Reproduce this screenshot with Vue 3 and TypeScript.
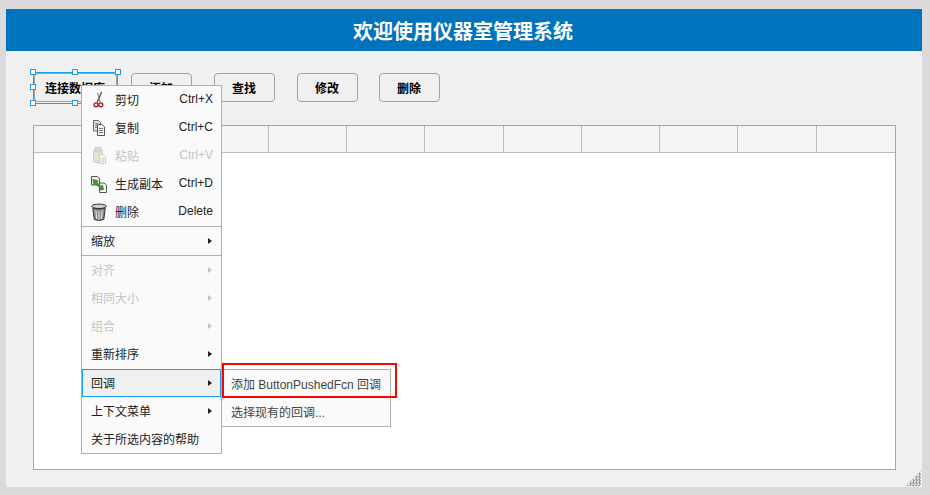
<script setup lang="ts">
interface Item { label: string; key?: string; icon?: string; disabled?: boolean; arrow?: boolean; cls?: string }
const buttons = [
  { label: '连接数据库', cls: 'b0' },
  { label: '添加', cls: 'b1' },
  { label: '查找', cls: 'b2' },
  { label: '修改', cls: 'b3' },
  { label: '删除', cls: 'b4' },
]
const columns = Array.from({ length: 11 }, (_, i) => i)
const top: Item[] = [
  { label: '剪切', key: 'Ctrl+X', icon: 'cut' },
  { label: '复制', key: 'Ctrl+C', icon: 'copy' },
  { label: '粘贴', key: 'Ctrl+V', icon: 'paste', disabled: true },
  { label: '生成副本', key: 'Ctrl+D', icon: 'dup' },
  { label: '删除', key: 'Delete', icon: 'trash' },
]
const rest: Item[] = [
  { label: '对齐', arrow: true, disabled: true },
  { label: '相同大小', arrow: true, disabled: true },
  { label: '组合', arrow: true, disabled: true },
  { label: '重新排序', arrow: true },
  { label: '回调', arrow: true, cls: 'active' },
  { label: '上下文菜单', arrow: true },
  { label: '关于所选内容的帮助' },
]
const handles = ['tl', 'tc', 'tr', 'ml', 'bl', 'bc', 'br']
</script>

<template>
  <div class="page">
    <div class="window">
      <header class="title">欢迎使用仪器室管理系统</header>
      <div class="toolbar">
        <button v-for="b in buttons" :key="b.label" class="btn" :class="b.cls">{{ b.label }}</button>
      </div>
      <div class="table">
        <div class="thead">
          <div v-for="c in columns" :key="c" class="th"></div>
        </div>
      </div>
      <div class="grip"></div>

      <div class="selection">
        <span v-for="h in handles" :key="h" class="handle" :class="h"></span>
      </div>

      <div class="menu">
        <div class="group">
          <div v-for="it in top" :key="it.label" class="row" :class="{ off: it.disabled }">
            <span class="ico">
              <svg v-if="it.icon === 'cut'" width="20" height="20" viewBox="0 0 20 20">
                <path d="M13.6 2 L9.2 12.4" stroke="#444" stroke-width="1.2" fill="none" />
                <path d="M9.6 3 L12.3 12.4" stroke="#888" stroke-width="1.2" fill="none" />
                <circle cx="8" cy="14.8" r="2" stroke="#b01020" stroke-width="1.3" fill="none" />
                <circle cx="12.8" cy="14.8" r="2" stroke="#b01020" stroke-width="1.3" fill="none" />
              </svg>
              <svg v-else-if="it.icon === 'copy'" width="20" height="20" viewBox="0 0 20 20">
                <path d="M5.5 2.5 H10.5 L12.5 4.5 V13 H5.5 Z" fill="#e4e4e4" stroke="#666" />
                <path d="M9.5 6.5 H14 L16.5 9 V17.5 H9.5 Z" fill="#f4f4f4" stroke="#555" />
                <path d="M7 5.5H10M7 7.5H9M7 9.5H9M11 10.5H15M11 12.5H15M11 14.5H15" stroke="#777" stroke-width="1" />
              </svg>
              <svg v-else-if="it.icon === 'paste'" width="20" height="20" viewBox="0 0 20 20">
                <rect x="5.5" y="3.5" width="9" height="13" rx="1" fill="#e8dfcc" stroke="#d8cfbc" />
                <rect x="7.5" y="1.5" width="5" height="3.5" fill="#ddd" stroke="#c8c8c8" />
                <path d="M11.5 8.5 H15 L17.5 11 V17.5 H11.5 Z" fill="#f6f6f6" stroke="#ccc" />
                <path d="M13 12.5H16M13 14H16M13 15.5H16" stroke="#d4d4d4" />
              </svg>
              <svg v-else-if="it.icon === 'dup'" width="20" height="20" viewBox="0 0 20 20">
                <path d="M3.5 2.5 H9.5 L11.5 4.5 V11 H3.5 Z" fill="#e8e8e8" stroke="#555" />
                <path d="M11.5 9 H16 L18.5 11 V18.5 H11.5 Z" fill="#f4f4f4" stroke="#555" />
                <path d="M5 5.5 L10 7 L9 8.5 L13 12.5 L14.5 11 L15.5 15.5 L11 16 L12.5 14 L7.5 10 L6.2 11 Z" fill="#4f9a35" stroke="#2f6b22" stroke-width=".7" />
              </svg>
              <svg v-else-if="it.icon === 'trash'" width="20" height="20" viewBox="0 0 20 20">
                <ellipse cx="11" cy="4.3" rx="7.3" ry="2.2" fill="#d2d2d2" stroke="#333" />
                <path d="M4.8 6 L6.2 17.5 Q11 19.3 15.8 17.5 L17.2 6 Q11 8.3 4.8 6 Z" fill="#8c8c8c" stroke="#333" />
                <path d="M8 8.5 L8.6 17M11 8.8 V17.8M14 8.5 L13.4 17" stroke="#e6e6e6" stroke-width="1" />
              </svg>
            </span>
            <span class="lab">{{ it.label }}</span>
            <span class="key">{{ it.key }}</span>
          </div>
        </div>
        <div class="group">
          <div class="row plain"><span class="lab">缩放</span><i class="arrow"></i></div>
        </div>
        <div class="group last">
          <div v-for="it in rest" :key="it.label" class="row plain" :class="[it.cls, { off: it.disabled }]">
            <span class="lab">{{ it.label }}</span>
            <i v-if="it.arrow" class="arrow"></i>
          </div>
        </div>
      </div>

      <div class="submenu">
        <div class="subrow">添加 ButtonPushedFcn 回调</div>
        <div class="subrow">选择现有的回调...</div>
      </div>
      <div class="redbox"></div>
    </div>
  </div>
</template>

<style>
html, body { margin: 0; background: #dadada; }
</style>

<style scoped>
.page {
  width: 930px;
  height: 495px;
  padding: 9px 8px 8px 6px;
  box-sizing: border-box;
  background: #dadada;
  font-family: "Liberation Sans", "Noto Sans CJK SC", sans-serif;
  font-size: 12px;
  overflow: hidden;
}
.window {
  position: relative;
  height: 478px;
  background: #f0f0f0;
  display: flex;
  flex-direction: column;
}
.title {
  height: 42px;
  line-height: 46px;
  box-sizing: border-box;
  padding-right: 2px;
  background: #0073bd;
  color: #fff;
  font-size: 20px;
  font-weight: 700;
  text-align: center;
  flex: none;
}
.toolbar {
  display: flex;
  margin: 22px 0 0 28px;
  height: 29px;
  flex: none;
}
.btn {
  width: 61px;
  height: 29px;
  box-sizing: border-box;
  padding: 0 1px 0 0;
  border: 1px solid #a3a3a3;
  border-radius: 4px;
  background: #f0f0f0;
  color: #000;
  font: 700 12px "Liberation Sans", "Noto Sans CJK SC", sans-serif;
}
.b0 { width: 83px; }
.b1 { margin-left: 14px; }
.b2, .b3 { margin-left: 22px; }
.b4 { margin-left: 21px; }
.table {
  margin: 23px 0 0 27px;
  width: 863px;
  height: 345px;
  box-sizing: border-box;
  border: 1px solid #a6a6a6;
  background: #fff;
  flex: none;
}
.thead {
  display: grid;
  grid-template-columns: repeat(11, 1fr);
  height: 27px;
  box-sizing: border-box;
  background: #f4f4f4;
  border-bottom: 1px solid #bdbdbd;
}
.th { border-right: 1px solid #bdbdbd; }
.th:last-child { border-right: 0; }
.grip {
  position: absolute;
  right: 1px;
  bottom: 1px;
  width: 15px;
  height: 15px;
  background: repeating-conic-gradient(#a0a0a0 0 25%, #e4e4e4 0 50%) 0 0 / 3px 3px;
  clip-path: polygon(100% 0, 100% 100%, 0 100%);
}
.selection {
  position: absolute;
  left: 27px;
  top: 63px;
  width: 85px;
  height: 32px;
  box-sizing: border-box;
  border: 1px solid #1aa0f0;
}
.handle {
  position: absolute;
  width: 4px;
  height: 4px;
  background: #fff;
  border: 1px solid #1aa0f0;
  box-sizing: content-box;
}
.tl { left: -4px; top: -4px; }
.tc { left: 38px; top: -4px; }
.tr { right: -4px; top: -4px; }
.ml { left: -4px; top: 11px; }
.bl { left: -4px; bottom: -3px; }
.bc { left: 38px; bottom: -3px; }
.br { right: -4px; bottom: -3px; }
.menu {
  position: absolute;
  left: 75px;
  top: 76px;
  width: 141px;
  box-sizing: border-box;
  border: 1px solid #b0b0b0;
  background: #fafafa;
  color: #222;
}
.group { border-bottom: 1px solid #b0b0b0; }
.group.last { border-bottom: 0; }
.row {
  position: relative;
  height: 28px;
  display: flex;
  align-items: center;
  box-sizing: border-box;
}
.ico {
  width: 20px;
  height: 20px;
  margin-left: 6px;
  flex: none;
  display: block;
}
.row .lab { margin-left: 7px; line-height: 28px; padding-top: 1px; }
.row.plain .lab { margin-left: 9px; }
.key {
  margin-left: auto;
  margin-right: 8px;
  position: relative;
  top: -1px;
}
.off { color: #c4c4c4; }
.arrow {
  position: absolute;
  right: 9px;
  top: 11px;
  width: 0;
  height: 0;
  border-left: 4px solid #222;
  border-top: 3px solid transparent;
  border-bottom: 3px solid transparent;
}
.off .arrow { border-left-color: #c4c4c4; }
.active {
  border: 1px solid #1aa0f0;
  background: #f0f0f0;
  margin-top: 1px;
}
.active .lab { margin-left: 8px !important; }
.active .arrow { right: 8px; top: 10px; }
.submenu {
  position: absolute;
  left: 216px;
  top: 360px;
  width: 169px;
  height: 58px;
  box-sizing: border-box;
  border: 1px solid #b0b0b0;
  border-left: 0;
  background: #fafafa;
  color: #444;
}
.subrow {
  height: 28px;
  line-height: 31px;
  padding-left: 9px;
  white-space: nowrap;
}
.redbox {
  position: absolute;
  left: 216px;
  top: 354px;
  width: 175px;
  height: 35px;
  box-sizing: border-box;
  border: 2px solid #f00;
}
</style>
